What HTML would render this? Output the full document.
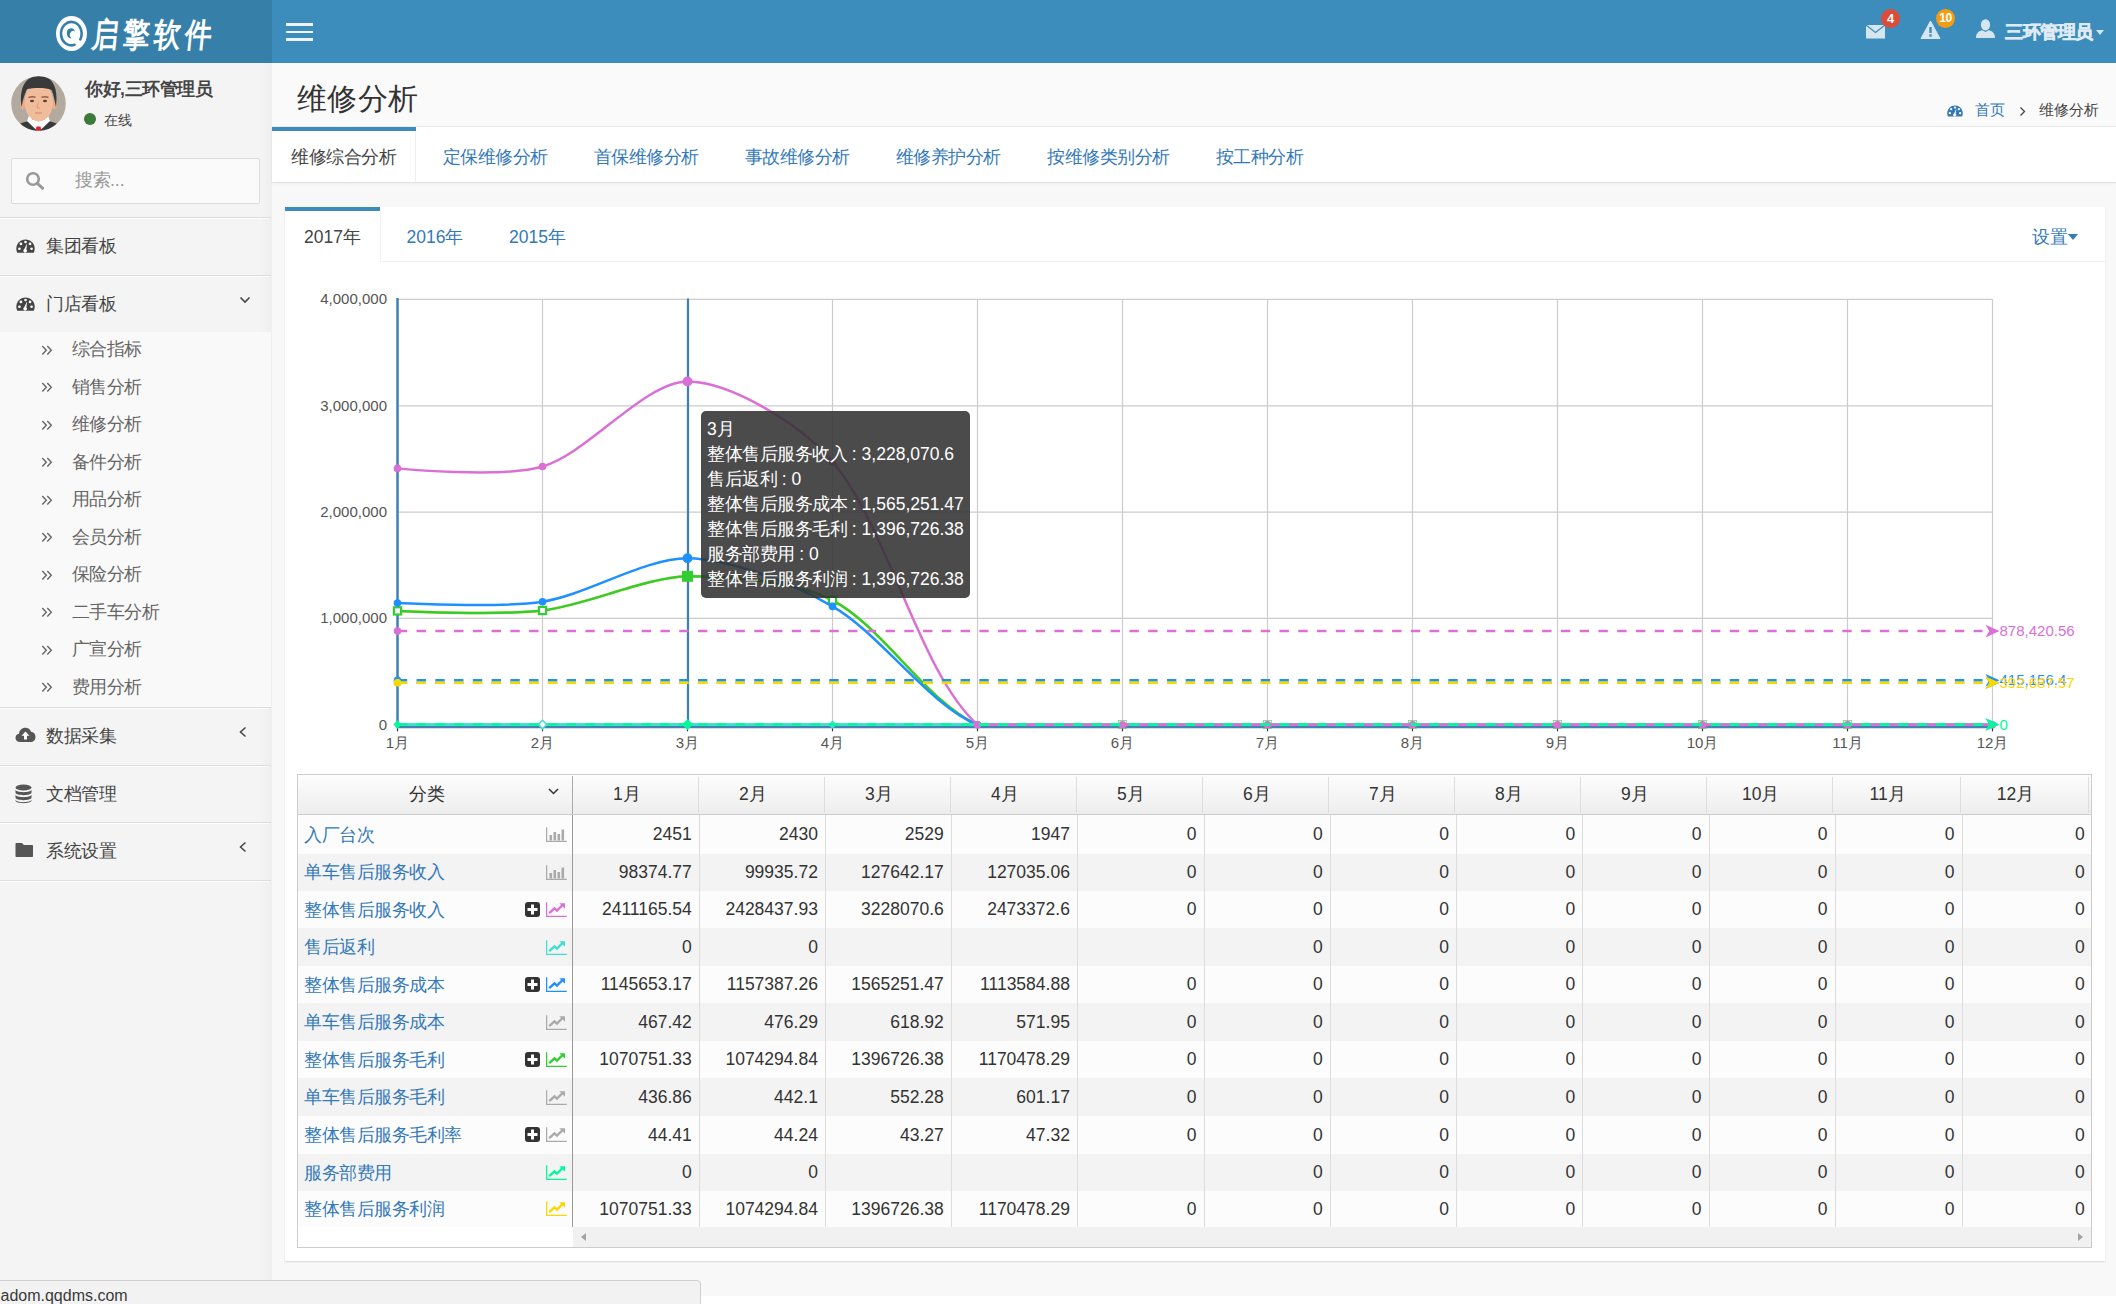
<!DOCTYPE html>
<html><head><meta charset="utf-8"><title>维修分析</title>
<style>
html,body{margin:0;padding:0;}
body{width:2116px;height:1304px;overflow:hidden;position:relative;background:#fff;font-family:'Liberation Sans', sans-serif;}
.t{position:absolute;white-space:nowrap;}
</style></head><body>
<div style="position:absolute;left:0;top:0;width:272px;height:63px;background:#367fa9"></div>
<div style="position:absolute;left:272px;top:0;width:1844px;height:63px;background:#3c8dbc"></div>
<svg style="position:absolute;left:50px;top:10px" width="50" height="46" viewBox="0 0 50 46">
<ellipse cx="21.5" cy="23.5" rx="15.5" ry="17.5" fill="#fff"/>
<path d="M30.3 29.4 A10.3 11.7 0 1 0 24.5 34.8" fill="none" stroke="#367fa9" stroke-width="2.6" stroke-linecap="round"/>
<path d="M25 21.5 A4.2 5 0 1 0 21.5 28.2 A3 3.6 0 0 1 25 21.5 Z" fill="#367fa9"/>
</svg>
<div class="t" style="left:94px;top:17px;font-size:31px;line-height:34px;color:#fff;font-weight:bold;letter-spacing:5px;transform:scale(0.86,1.06) skewX(-7deg);transform-origin:0 0;">启擎软件</div>
<div style="position:absolute;left:286px;top:23px;width:27px;height:2.5px;background:#fff;opacity:.9"></div>
<div style="position:absolute;left:286px;top:30.5px;width:27px;height:2.5px;background:#fff;opacity:.9"></div>
<div style="position:absolute;left:286px;top:38px;width:27px;height:2.5px;background:#fff;opacity:.9"></div>
<svg style="position:absolute;left:1865px;top:23px" width="21" height="17" viewBox="0 0 21 17">
<path d="M1 2 h19 v13.5 h-19 z" fill="#d6e6f1"/>
<path d="M1 2 L10.5 9.5 L20 2" fill="none" stroke="#3c8dbc" stroke-width="1.3"/>
</svg>
<div style="position:absolute;left:1881px;top:9px;width:19px;height:19px;border-radius:50%;background:#dd4b39;color:#fff;font:bold 13px/19px 'Liberation Sans', sans-serif;text-align:center">4</div>
<svg style="position:absolute;left:1920px;top:20px" width="21" height="20" viewBox="0 0 21 20">
<path d="M10.5 1 L20 18.5 L1 18.5 Z" fill="#d6e6f1" stroke="#d6e6f1" stroke-width="1" stroke-linejoin="round"/>
<rect x="9.3" y="7" width="2.4" height="6" fill="#3c8dbc"/><rect x="9.3" y="14.3" width="2.4" height="2.4" fill="#3c8dbc"/>
</svg>
<div style="position:absolute;left:1936px;top:9px;width:19px;height:19px;border-radius:50%;background:#f39c12;color:#fff;font:bold 12px/19px 'Liberation Sans', sans-serif;text-align:center;letter-spacing:-0.5px">10</div>
<svg style="position:absolute;left:1975px;top:19px" width="21" height="20" viewBox="0 0 21 20">
<ellipse cx="10.5" cy="5.8" rx="4.6" ry="5.6" fill="#d6e6f1"/>
<path d="M1 19 C1 13.5 4 12 7.5 11.2 L10.5 13 L13.5 11.2 C17 12 20 13.5 20 19 Z" fill="#d6e6f1"/>
</svg>
<div class="t" style="left:2005px;top:24px;font-size:17.5px;line-height:17.5px;color:#dfeaf3;font-weight:bold;-webkit-text-stroke:0.6px #dfeaf3;"><span style="letter-spacing:-0.50px">三环管理员</span></div>
<div style="position:absolute;left:2096px;top:30px;width:0;height:0;border-left:4.5px solid transparent;border-right:4.5px solid transparent;border-top:5px solid #d6e6f1"></div>
<div style="position:absolute;left:0;top:63px;width:272px;height:1241px;background:#f4f4f4"></div>
<div style="position:absolute;left:260px;top:63px;width:12px;height:1241px;background:linear-gradient(to right,rgba(0,0,0,0),rgba(0,0,0,0.025))"></div>
<svg style="position:absolute;left:11px;top:76px" width="55" height="55" viewBox="0 0 55 55">
<defs><clipPath id="avc"><circle cx="27.5" cy="27.5" r="27.3"/></clipPath></defs>
<g clip-path="url(#avc)">
<rect width="55" height="55" fill="#b3aa9f"/>
<path d="M2 55 C4 49 10 46.5 19 45 L36 45 C45 46.5 51 49 53 55 Z" fill="#3a3a3a"/>
<path d="M16 45 L27.5 56 L39 45 L37 39.5 L18 39.5 Z" fill="#fff"/>
<path d="M25.5 50.5 L29.5 50.5 L30.5 55 L24.5 55 Z" fill="#e0222c"/>
<rect x="21" y="36" width="13" height="8" fill="#e3a786"/>
<ellipse cx="11.8" cy="28.5" rx="2.6" ry="4.8" fill="#e9ab8a"/><ellipse cx="43.2" cy="28.5" rx="2.6" ry="4.8" fill="#e9ab8a"/>
<ellipse cx="27.8" cy="26" rx="14.2" ry="19.5" fill="#f1bc9c"/>
<path d="M10.5 31 C8 12 14 0 28 0 C42 0 47.5 12 45 31 C43.5 24 42.5 18 40.5 14 C34 11 22 12 16 13 C14 17 12 23 10.5 31 Z" fill="#3a3a3a"/>
<path d="M17.5 21.5 Q21 20 24.5 21.3" stroke="#9a6048" stroke-width="1.5" fill="none"/><path d="M30.5 21.3 Q34 20 37.5 21.5" stroke="#9a6048" stroke-width="1.5" fill="none"/>
<ellipse cx="21" cy="25" rx="2" ry="1.2" fill="#5a4030"/><ellipse cx="34" cy="25" rx="2" ry="1.2" fill="#5a4030"/>
<path d="M27.5 26 L26 32 L29 32" stroke="#d89a7c" stroke-width="0.9" fill="none"/>
<path d="M24 37 L31 37" stroke="#c98870" stroke-width="1"/>
</g></svg>
<div class="t" style="left:85px;top:81px;font-size:17.5px;line-height:17.5px;color:#444;font-weight:bold;"><span style="letter-spacing:-0.50px">你好</span>,<span style="letter-spacing:-0.50px">三环管理员</span></div>
<div style="position:absolute;left:84px;top:113px;width:12px;height:12px;border-radius:50%;background:#3b7a3b"></div>
<div class="t" style="left:104px;top:113.5px;font-size:13.75px;line-height:13.75px;color:#444;font-weight:normal;"><span style="letter-spacing:-0.25px">在线</span></div>
<div style="position:absolute;left:10.5px;top:158px;width:247px;height:44px;border:1px solid #dcdcdc;border-radius:2px;background:#fafafa"></div>
<svg style="position:absolute;left:25px;top:171px" width="20" height="19" viewBox="0 0 20 19">
<circle cx="8" cy="8" r="5.8" fill="none" stroke="#999" stroke-width="2.6"/>
<path d="M12.3 12.3 L17.5 17.2" stroke="#999" stroke-width="3" stroke-linecap="round"/>
</svg>
<div class="t" style="left:75px;top:172px;font-size:17.5px;line-height:17.5px;color:#999;font-weight:normal;"><span style="letter-spacing:-0.50px">搜索</span>...</div>
<div style="position:absolute;left:0;top:217px;width:271px;height:1px;background:#dddddd"></div>
<div style="position:absolute;left:0;top:218px;width:269px;height:1px;background:rgba(255,255,255,0.8)"></div>
<div style="position:absolute;left:0;top:275px;width:271px;height:1px;background:#dddddd"></div>
<div style="position:absolute;left:0;top:276px;width:269px;height:1px;background:rgba(255,255,255,0.8)"></div>
<div style="position:absolute;left:0;top:707px;width:271px;height:1px;background:#dddddd"></div>
<div style="position:absolute;left:0;top:708px;width:269px;height:1px;background:rgba(255,255,255,0.8)"></div>
<div style="position:absolute;left:0;top:765px;width:271px;height:1px;background:#dddddd"></div>
<div style="position:absolute;left:0;top:766px;width:269px;height:1px;background:rgba(255,255,255,0.8)"></div>
<div style="position:absolute;left:0;top:822px;width:271px;height:1px;background:#dddddd"></div>
<div style="position:absolute;left:0;top:823px;width:269px;height:1px;background:rgba(255,255,255,0.8)"></div>
<div style="position:absolute;left:0;top:880px;width:271px;height:1px;background:#dddddd"></div>
<div style="position:absolute;left:0;top:881px;width:269px;height:1px;background:rgba(255,255,255,0.8)"></div>
<div style="position:absolute;left:0;top:331.5px;width:271px;height:375.5px;background:#f9f9f9"></div>
<svg style="position:absolute;left:16px;top:239px" width="19" height="14.2" viewBox="0 0 20 15">
<path d="M10 0.5 C4.5 0.5 0.3 4.8 0.3 10.3 C0.3 11.8 0.6 13.2 1.2 14.5 L18.8 14.5 C19.4 13.2 19.7 11.8 19.7 10.3 C19.7 4.8 15.5 0.5 10 0.5 Z" fill="#444"/>
<circle cx="3.6" cy="10.3" r="1.4" fill="#fff"/><circle cx="5.2" cy="5.2" r="1.4" fill="#fff"/><circle cx="10" cy="3.2" r="1.4" fill="#fff"/>
<circle cx="14.8" cy="5.2" r="1.4" fill="#fff"/><circle cx="16.4" cy="10.3" r="1.4" fill="#fff"/>
<path d="M11.8 4.5 L10.9 11 A1.9 1.9 0 1 1 8.6 10.8 Z" fill="#fff"/>
</svg>
<div class="t" style="left:46px;top:238px;font-size:17.5px;line-height:17.5px;color:#444;font-weight:normal;"><span style="letter-spacing:-0.50px">集团看板</span></div>
<svg style="position:absolute;left:16px;top:297px" width="19" height="14.2" viewBox="0 0 20 15">
<path d="M10 0.5 C4.5 0.5 0.3 4.8 0.3 10.3 C0.3 11.8 0.6 13.2 1.2 14.5 L18.8 14.5 C19.4 13.2 19.7 11.8 19.7 10.3 C19.7 4.8 15.5 0.5 10 0.5 Z" fill="#444"/>
<circle cx="3.6" cy="10.3" r="1.4" fill="#fff"/><circle cx="5.2" cy="5.2" r="1.4" fill="#fff"/><circle cx="10" cy="3.2" r="1.4" fill="#fff"/>
<circle cx="14.8" cy="5.2" r="1.4" fill="#fff"/><circle cx="16.4" cy="10.3" r="1.4" fill="#fff"/>
<path d="M11.8 4.5 L10.9 11 A1.9 1.9 0 1 1 8.6 10.8 Z" fill="#fff"/>
</svg>
<div class="t" style="left:46px;top:296px;font-size:17.5px;line-height:17.5px;color:#444;font-weight:normal;"><span style="letter-spacing:-0.50px">门店看板</span></div>
<svg style="position:absolute;left:239px;top:296px" width="12" height="8" viewBox="0 0 12 8"><path d="M1.5 1.5 L6 6 L10.5 1.5" fill="none" stroke="#444" stroke-width="1.6"/></svg>
<svg style="position:absolute;left:41px;top:344.5px" width="12" height="11" viewBox="0 0 12 11"><path d="M1.3 1 L5.3 5.2 L1.3 9.4 M6.3 1 L10.3 5.2 L6.3 9.4" fill="none" stroke="#666" stroke-width="1.4"/></svg>
<div class="t" style="left:71.5px;top:341.0px;font-size:17.5px;line-height:17.5px;color:#666;font-weight:normal;"><span style="letter-spacing:-0.50px">综合指标</span></div>
<svg style="position:absolute;left:41px;top:382.0px" width="12" height="11" viewBox="0 0 12 11"><path d="M1.3 1 L5.3 5.2 L1.3 9.4 M6.3 1 L10.3 5.2 L6.3 9.4" fill="none" stroke="#666" stroke-width="1.4"/></svg>
<div class="t" style="left:71.5px;top:378.5px;font-size:17.5px;line-height:17.5px;color:#666;font-weight:normal;"><span style="letter-spacing:-0.50px">销售分析</span></div>
<svg style="position:absolute;left:41px;top:419.5px" width="12" height="11" viewBox="0 0 12 11"><path d="M1.3 1 L5.3 5.2 L1.3 9.4 M6.3 1 L10.3 5.2 L6.3 9.4" fill="none" stroke="#666" stroke-width="1.4"/></svg>
<div class="t" style="left:71.5px;top:416.0px;font-size:17.5px;line-height:17.5px;color:#666;font-weight:normal;"><span style="letter-spacing:-0.50px">维修分析</span></div>
<svg style="position:absolute;left:41px;top:457.0px" width="12" height="11" viewBox="0 0 12 11"><path d="M1.3 1 L5.3 5.2 L1.3 9.4 M6.3 1 L10.3 5.2 L6.3 9.4" fill="none" stroke="#666" stroke-width="1.4"/></svg>
<div class="t" style="left:71.5px;top:453.5px;font-size:17.5px;line-height:17.5px;color:#666;font-weight:normal;"><span style="letter-spacing:-0.50px">备件分析</span></div>
<svg style="position:absolute;left:41px;top:494.5px" width="12" height="11" viewBox="0 0 12 11"><path d="M1.3 1 L5.3 5.2 L1.3 9.4 M6.3 1 L10.3 5.2 L6.3 9.4" fill="none" stroke="#666" stroke-width="1.4"/></svg>
<div class="t" style="left:71.5px;top:491.0px;font-size:17.5px;line-height:17.5px;color:#666;font-weight:normal;"><span style="letter-spacing:-0.50px">用品分析</span></div>
<svg style="position:absolute;left:41px;top:532.0px" width="12" height="11" viewBox="0 0 12 11"><path d="M1.3 1 L5.3 5.2 L1.3 9.4 M6.3 1 L10.3 5.2 L6.3 9.4" fill="none" stroke="#666" stroke-width="1.4"/></svg>
<div class="t" style="left:71.5px;top:528.5px;font-size:17.5px;line-height:17.5px;color:#666;font-weight:normal;"><span style="letter-spacing:-0.50px">会员分析</span></div>
<svg style="position:absolute;left:41px;top:569.5px" width="12" height="11" viewBox="0 0 12 11"><path d="M1.3 1 L5.3 5.2 L1.3 9.4 M6.3 1 L10.3 5.2 L6.3 9.4" fill="none" stroke="#666" stroke-width="1.4"/></svg>
<div class="t" style="left:71.5px;top:566.0px;font-size:17.5px;line-height:17.5px;color:#666;font-weight:normal;"><span style="letter-spacing:-0.50px">保险分析</span></div>
<svg style="position:absolute;left:41px;top:607.0px" width="12" height="11" viewBox="0 0 12 11"><path d="M1.3 1 L5.3 5.2 L1.3 9.4 M6.3 1 L10.3 5.2 L6.3 9.4" fill="none" stroke="#666" stroke-width="1.4"/></svg>
<div class="t" style="left:71.5px;top:603.5px;font-size:17.5px;line-height:17.5px;color:#666;font-weight:normal;"><span style="letter-spacing:-0.50px">二手车分析</span></div>
<svg style="position:absolute;left:41px;top:644.5px" width="12" height="11" viewBox="0 0 12 11"><path d="M1.3 1 L5.3 5.2 L1.3 9.4 M6.3 1 L10.3 5.2 L6.3 9.4" fill="none" stroke="#666" stroke-width="1.4"/></svg>
<div class="t" style="left:71.5px;top:641.0px;font-size:17.5px;line-height:17.5px;color:#666;font-weight:normal;"><span style="letter-spacing:-0.50px">广宣分析</span></div>
<svg style="position:absolute;left:41px;top:682.0px" width="12" height="11" viewBox="0 0 12 11"><path d="M1.3 1 L5.3 5.2 L1.3 9.4 M6.3 1 L10.3 5.2 L6.3 9.4" fill="none" stroke="#666" stroke-width="1.4"/></svg>
<div class="t" style="left:71.5px;top:678.5px;font-size:17.5px;line-height:17.5px;color:#666;font-weight:normal;"><span style="letter-spacing:-0.50px">费用分析</span></div>
<svg style="position:absolute;left:15px;top:727px" width="21" height="16" viewBox="0 0 21 16">
<path d="M5 15 C2.2 15 0.5 13 0.5 10.7 C0.5 8.6 2 7 4 6.7 C4.3 3.3 7 0.8 10.3 0.8 C13 0.8 15.2 2.4 16 4.8 C18.6 5 20.5 7.2 20.5 9.9 C20.5 12.8 18.3 15 15.5 15 Z" fill="#555"/>
<path d="M10.5 4.5 L14.5 8.8 L12 8.8 L12 12.5 L9 12.5 L9 8.8 L6.5 8.8 Z" fill="#fff"/>
</svg>
<div class="t" style="left:46px;top:728px;font-size:17.5px;line-height:17.5px;color:#444;font-weight:normal;"><span style="letter-spacing:-0.50px">数据采集</span></div>
<svg style="position:absolute;left:238px;top:726px" width="10" height="12" viewBox="0 0 10 12"><path d="M7.5 1.5 L2.5 6 L7.5 10.5" fill="none" stroke="#444" stroke-width="1.5"/></svg>
<svg style="position:absolute;left:15px;top:784px" width="18" height="20" viewBox="0 0 18 20">
<ellipse cx="8.5" cy="3.5" rx="8" ry="3" fill="#555"/>
<path d="M0.5 5.5 C0.5 9 16.5 9 16.5 5.5 L16.5 8.5 C16.5 12 0.5 12 0.5 8.5 Z" fill="#555"/>
<path d="M0.5 10.5 C0.5 14 16.5 14 16.5 10.5 L16.5 13.5 C16.5 17 0.5 17 0.5 13.5 Z" fill="#555"/>
<path d="M0.5 15.5 C0.5 19 16.5 19 16.5 15.5 L16.5 16.5 C16.5 20 0.5 20 0.5 16.5 Z" fill="#555"/>
</svg>
<div class="t" style="left:46px;top:786px;font-size:17.5px;line-height:17.5px;color:#444;font-weight:normal;"><span style="letter-spacing:-0.50px">文档管理</span></div>
<svg style="position:absolute;left:15px;top:842px" width="19" height="16" viewBox="0 0 19 16">
<path d="M1.5 1 L7 1 L8.8 3 L17 3 C17.6 3 18 3.4 18 4 L18 14 C18 14.6 17.6 15 17 15 L1.5 15 C0.9 15 0.5 14.6 0.5 14 L0.5 2 C0.5 1.4 0.9 1 1.5 1 Z" fill="#555"/>
</svg>
<div class="t" style="left:46px;top:843px;font-size:17.5px;line-height:17.5px;color:#444;font-weight:normal;"><span style="letter-spacing:-0.50px">系统设置</span></div>
<svg style="position:absolute;left:238px;top:841px" width="10" height="12" viewBox="0 0 10 12"><path d="M7.5 1.5 L2.5 6 L7.5 10.5" fill="none" stroke="#444" stroke-width="1.5"/></svg>
<div style="position:absolute;left:272px;top:63px;width:1844px;height:64px;background:#fafafa"></div>
<div class="t" style="left:297px;top:83.5px;font-size:30px;line-height:30px;color:#333;font-weight:normal;letter-spacing:0.4px;">维修分析</div>
<svg style="position:absolute;left:1947px;top:104.5px" width="16" height="12.0" viewBox="0 0 20 15">
<path d="M10 0.5 C4.5 0.5 0.3 4.8 0.3 10.3 C0.3 11.8 0.6 13.2 1.2 14.5 L18.8 14.5 C19.4 13.2 19.7 11.8 19.7 10.3 C19.7 4.8 15.5 0.5 10 0.5 Z" fill="#3479b8"/>
<circle cx="3.6" cy="10.3" r="1.4" fill="#fff"/><circle cx="5.2" cy="5.2" r="1.4" fill="#fff"/><circle cx="10" cy="3.2" r="1.4" fill="#fff"/>
<circle cx="14.8" cy="5.2" r="1.4" fill="#fff"/><circle cx="16.4" cy="10.3" r="1.4" fill="#fff"/>
<path d="M11.8 4.5 L10.9 11 A1.9 1.9 0 1 1 8.6 10.8 Z" fill="#fff"/>
</svg>
<div class="t" style="left:1974.5px;top:102px;font-size:15px;line-height:15px;color:#3479b8;font-weight:normal;">首页</div>
<svg style="position:absolute;left:2018px;top:106px" width="9" height="11" viewBox="0 0 9 11"><path d="M2.5 1.5 L6.5 5.5 L2.5 9.5" fill="none" stroke="#444" stroke-width="1.3"/></svg>
<div class="t" style="left:2038.5px;top:102px;font-size:15px;line-height:15px;color:#444;font-weight:normal;">维修分析</div>
<div style="position:absolute;left:272px;top:182px;width:1844px;height:1114px;background:#f8f8f8"></div>
<div style="position:absolute;left:272px;top:127px;width:1844px;height:55px;background:#fff;box-shadow:0 1px 1px rgba(0,0,0,0.05),0 1px 3px rgba(0,0,0,0.06)"></div>
<div style="position:absolute;left:272px;top:126px;width:1844px;height:1px;background:#ebebeb"></div>
<div style="position:absolute;left:272px;top:127px;width:144px;height:4px;background:#3c8dbc"></div>
<div style="position:absolute;left:415px;top:131px;width:1px;height:51px;background:#f0f0f0"></div>
<div class="t" style="left:291px;top:148.5px;font-size:17.5px;line-height:17.5px;color:#444;font-weight:normal;"><span style="letter-spacing:-0.50px">维修综合分析</span></div>
<div class="t" style="left:442.5px;top:148.5px;font-size:17.5px;line-height:17.5px;color:#3479b8;font-weight:normal;"><span style="letter-spacing:-0.50px">定保维修分析</span></div>
<div class="t" style="left:593.8px;top:148.5px;font-size:17.5px;line-height:17.5px;color:#3479b8;font-weight:normal;"><span style="letter-spacing:-0.50px">首保维修分析</span></div>
<div class="t" style="left:744.8px;top:148.5px;font-size:17.5px;line-height:17.5px;color:#3479b8;font-weight:normal;"><span style="letter-spacing:-0.50px">事故维修分析</span></div>
<div class="t" style="left:895.8px;top:148.5px;font-size:17.5px;line-height:17.5px;color:#3479b8;font-weight:normal;"><span style="letter-spacing:-0.50px">维修养护分析</span></div>
<div class="t" style="left:1047px;top:148.5px;font-size:17.5px;line-height:17.5px;color:#3479b8;font-weight:normal;"><span style="letter-spacing:-0.50px">按维修类别分析</span></div>
<div class="t" style="left:1215.5px;top:148.5px;font-size:17.5px;line-height:17.5px;color:#3479b8;font-weight:normal;"><span style="letter-spacing:-0.50px">按工种分析</span></div>
<div style="position:absolute;left:285px;top:207px;width:1820px;height:1054px;background:#fff;box-shadow:0 1px 1.5px rgba(0,0,0,0.12)"></div>
<div style="position:absolute;left:285px;top:207px;width:95px;height:4px;background:#3c8dbc"></div>
<div style="position:absolute;left:379.5px;top:211px;width:1px;height:50px;background:#f0f0f0"></div>
<div style="position:absolute;left:380px;top:261px;width:1725px;height:1px;background:#f0f0f0"></div>
<div class="t" style="left:304px;top:228.5px;font-size:17.5px;line-height:17.5px;color:#444;font-weight:normal;">2017<span style="letter-spacing:-0.50px">年</span></div>
<div class="t" style="left:406.5px;top:228.5px;font-size:17.5px;line-height:17.5px;color:#3479b8;font-weight:normal;">2016<span style="letter-spacing:-0.50px">年</span></div>
<div class="t" style="left:509px;top:228.5px;font-size:17.5px;line-height:17.5px;color:#3479b8;font-weight:normal;">2015<span style="letter-spacing:-0.50px">年</span></div>
<div class="t" style="left:2032px;top:229px;font-size:17.5px;line-height:17.5px;color:#3479b8;font-weight:normal;"><span style="letter-spacing:-0.50px">设置</span></div>
<div style="position:absolute;left:2068px;top:234px;width:0;height:0;border-left:5px solid transparent;border-right:5px solid transparent;border-top:6px solid #3479b8"></div>
<svg style="position:absolute;left:0;top:0" width="2116" height="1304" viewBox="0 0 2116 1304">
<line x1="397.5" y1="724.8" x2="1992.5" y2="724.8" stroke="#cccccc" stroke-width="1.2"/>
<line x1="397.5" y1="618.4" x2="1992.5" y2="618.4" stroke="#cccccc" stroke-width="1.2"/>
<line x1="397.5" y1="512.1" x2="1992.5" y2="512.1" stroke="#cccccc" stroke-width="1.2"/>
<line x1="397.5" y1="405.8" x2="1992.5" y2="405.8" stroke="#cccccc" stroke-width="1.2"/>
<line x1="397.5" y1="299.4" x2="1992.5" y2="299.4" stroke="#cccccc" stroke-width="1.2"/>
<line x1="542.5" y1="299.4" x2="542.5" y2="724.8" stroke="#cccccc" stroke-width="1.2"/>
<line x1="687.5" y1="299.4" x2="687.5" y2="724.8" stroke="#cccccc" stroke-width="1.2"/>
<line x1="832.5" y1="299.4" x2="832.5" y2="724.8" stroke="#cccccc" stroke-width="1.2"/>
<line x1="977.5" y1="299.4" x2="977.5" y2="724.8" stroke="#cccccc" stroke-width="1.2"/>
<line x1="1122.5" y1="299.4" x2="1122.5" y2="724.8" stroke="#cccccc" stroke-width="1.2"/>
<line x1="1267.5" y1="299.4" x2="1267.5" y2="724.8" stroke="#cccccc" stroke-width="1.2"/>
<line x1="1412.5" y1="299.4" x2="1412.5" y2="724.8" stroke="#cccccc" stroke-width="1.2"/>
<line x1="1557.5" y1="299.4" x2="1557.5" y2="724.8" stroke="#cccccc" stroke-width="1.2"/>
<line x1="1702.5" y1="299.4" x2="1702.5" y2="724.8" stroke="#cccccc" stroke-width="1.2"/>
<line x1="1847.5" y1="299.4" x2="1847.5" y2="724.8" stroke="#cccccc" stroke-width="1.2"/>
<line x1="1992.5" y1="299.4" x2="1992.5" y2="724.8" stroke="#cccccc" stroke-width="1.2"/>
<line x1="397.5" y1="725.8" x2="397.5" y2="731.3" stroke="#333" stroke-width="1.2"/>
<line x1="542.5" y1="725.8" x2="542.5" y2="731.3" stroke="#333" stroke-width="1.2"/>
<line x1="687.5" y1="725.8" x2="687.5" y2="731.3" stroke="#333" stroke-width="1.2"/>
<line x1="832.5" y1="725.8" x2="832.5" y2="731.3" stroke="#333" stroke-width="1.2"/>
<line x1="977.5" y1="725.8" x2="977.5" y2="731.3" stroke="#333" stroke-width="1.2"/>
<line x1="1122.5" y1="725.8" x2="1122.5" y2="731.3" stroke="#333" stroke-width="1.2"/>
<line x1="1267.5" y1="725.8" x2="1267.5" y2="731.3" stroke="#333" stroke-width="1.2"/>
<line x1="1412.5" y1="725.8" x2="1412.5" y2="731.3" stroke="#333" stroke-width="1.2"/>
<line x1="1557.5" y1="725.8" x2="1557.5" y2="731.3" stroke="#333" stroke-width="1.2"/>
<line x1="1702.5" y1="725.8" x2="1702.5" y2="731.3" stroke="#333" stroke-width="1.2"/>
<line x1="1847.5" y1="725.8" x2="1847.5" y2="731.3" stroke="#333" stroke-width="1.2"/>
<line x1="1992.5" y1="725.8" x2="1992.5" y2="731.3" stroke="#333" stroke-width="1.2"/>
<line x1="397.5" y1="297.9" x2="397.5" y2="727.3" stroke="#3e80b6" stroke-width="2.5"/>
<line x1="396.5" y1="726.9" x2="1993.5" y2="726.9" stroke="#4682b4" stroke-width="2.6"/>
<line x1="688.0" y1="298.4" x2="688.0" y2="724.8" stroke="#3e80b6" stroke-width="2.2"/>
<path d="M397.50,610.93 C397.50,610.93 499.59,615.68 542.50,610.55 C586.59,605.28 643.70,577.80 687.50,576.26 C730.70,576.26 794.68,580.95 832.50,600.32 C881.68,625.51 928.03,703.57 977.50,724.80 C1015.03,724.80 1079.00,724.80 1122.50,724.80 C1166.00,724.80 1224.00,724.80 1267.50,724.80 C1311.00,724.80 1369.00,724.80 1412.50,724.80 C1456.00,724.80 1514.00,724.80 1557.50,724.80 C1601.00,724.80 1659.00,724.80 1702.50,724.80 C1746.00,724.80 1804.00,724.80 1847.50,724.80 C1891.00,724.80 1992.50,724.80 1992.50,724.80" fill="none" stroke="#ffd700" stroke-width="2.5" stroke-linejoin="round"/>
<line x1="397.5" y1="724.5" x2="1992.5" y2="724.5" stroke="#00fa9a" stroke-width="2.5"/>
<path d="M397.50,610.93 C397.50,610.93 499.59,615.68 542.50,610.55 C586.59,605.28 643.70,577.80 687.50,576.26 C730.70,576.26 794.68,580.95 832.50,600.32 C881.68,625.51 928.03,703.57 977.50,724.80 C1015.03,724.80 1079.00,724.80 1122.50,724.80 C1166.00,724.80 1224.00,724.80 1267.50,724.80 C1311.00,724.80 1369.00,724.80 1412.50,724.80 C1456.00,724.80 1514.00,724.80 1557.50,724.80 C1601.00,724.80 1659.00,724.80 1702.50,724.80 C1746.00,724.80 1804.00,724.80 1847.50,724.80 C1891.00,724.80 1992.50,724.80 1992.50,724.80" fill="none" stroke="#32cd32" stroke-width="2.5" stroke-linejoin="round"/>
<rect x="393.9" y="607.3" width="7.2" height="7.2" fill="#fff" stroke="#32cd32" stroke-width="2.2"/>
<rect x="538.9" y="606.9" width="7.2" height="7.2" fill="#fff" stroke="#32cd32" stroke-width="2.2"/>
<rect x="682.0" y="570.8" width="11" height="11" fill="#32cd32"/>
<rect x="828.9" y="596.7" width="7.2" height="7.2" fill="#fff" stroke="#32cd32" stroke-width="2.2"/>
<rect x="1118.5" y="720.5" width="8" height="8" fill="none" stroke="#32cd32" stroke-width="0.8" opacity="0.7"/>
<rect x="1263.5" y="720.5" width="8" height="8" fill="none" stroke="#32cd32" stroke-width="0.8" opacity="0.7"/>
<rect x="1408.5" y="720.5" width="8" height="8" fill="none" stroke="#32cd32" stroke-width="0.8" opacity="0.7"/>
<rect x="1553.5" y="720.5" width="8" height="8" fill="none" stroke="#32cd32" stroke-width="0.8" opacity="0.7"/>
<rect x="1698.5" y="720.5" width="8" height="8" fill="none" stroke="#32cd32" stroke-width="0.8" opacity="0.7"/>
<rect x="1843.5" y="720.5" width="8" height="8" fill="none" stroke="#32cd32" stroke-width="0.8" opacity="0.7"/>
<path d="M397.50,602.96 C397.50,602.96 499.93,608.26 542.50,601.71 C586.93,594.87 644.20,558.34 687.50,558.34 C731.20,559.04 793.41,583.93 832.50,606.37 C880.41,633.87 928.47,704.78 977.50,724.80 C1015.47,724.80 1079.00,724.80 1122.50,724.80 C1166.00,724.80 1224.00,724.80 1267.50,724.80 C1311.00,724.80 1369.00,724.80 1412.50,724.80 C1456.00,724.80 1514.00,724.80 1557.50,724.80 C1601.00,724.80 1659.00,724.80 1702.50,724.80 C1746.00,724.80 1804.00,724.80 1847.50,724.80 C1891.00,724.80 1992.50,724.80 1992.50,724.80" fill="none" stroke="#1e90ff" stroke-width="2.5" stroke-linejoin="round"/>
<circle cx="397.5" cy="603.0" r="3.8" fill="#1e90ff"/>
<circle cx="542.5" cy="601.7" r="3.8" fill="#1e90ff"/>
<circle cx="687.5" cy="558.3" r="5" fill="#1e90ff"/>
<circle cx="832.5" cy="606.4" r="3.8" fill="#1e90ff"/>
<circle cx="977.5" cy="724.8" r="3.8" fill="#1e90ff"/>
<line x1="397.5" y1="724.5" x2="1992.5" y2="724.5" stroke="#40e0d0" stroke-width="2.5"/>
<path d="M393.3,724.5 L397.5,720.3 L401.7,724.5 L397.5,728.7 Z" fill="#00fa9a"/>
<path d="M538.3,724.5 L542.5,720.3 L546.7,724.5 L542.5,728.7 Z" fill="#fff" stroke="#40e0d0" stroke-width="1.6"/>
<path d="M682.0,724.5 L687.5,719.0 L693.0,724.5 L687.5,730.0 Z" fill="#00fa9a"/>
<path d="M828.3,724.5 L832.5,720.3 L836.7,724.5 L832.5,728.7 Z" fill="#40e0d0"/>
<path d="M973.3,724.5 L977.5,720.3 L981.7,724.5 L977.5,728.7 Z" fill="#40e0d0"/>
<path d="M397.50,468.37 C397.50,468.37 502.21,478.61 542.50,466.54 C589.21,452.54 643.69,382.22 687.50,381.49 C730.69,381.49 801.56,425.14 832.50,461.76 C888.56,528.13 918.83,671.58 977.50,724.80 C1005.83,724.80 1079.00,724.80 1122.50,724.80 C1166.00,724.80 1224.00,724.80 1267.50,724.80 C1311.00,724.80 1369.00,724.80 1412.50,724.80 C1456.00,724.80 1514.00,724.80 1557.50,724.80 C1601.00,724.80 1659.00,724.80 1702.50,724.80 C1746.00,724.80 1804.00,724.80 1847.50,724.80 C1891.00,724.80 1992.50,724.80 1992.50,724.80" fill="none" stroke="#da70d6" stroke-width="2.5" stroke-linejoin="round"/>
<circle cx="397.5" cy="468.4" r="3.8" fill="#da70d6"/>
<circle cx="542.5" cy="466.5" r="3.8" fill="#da70d6"/>
<circle cx="687.5" cy="381.5" r="5" fill="#da70d6"/>
<circle cx="832.5" cy="461.8" r="3.8" fill="#da70d6"/>
<circle cx="977.5" cy="724.8" r="3.8" fill="#da70d6"/>
<circle cx="1122.5" cy="724.8" r="3.8" fill="#da70d6"/>
<circle cx="1267.5" cy="724.8" r="3.8" fill="#da70d6"/>
<circle cx="1412.5" cy="724.8" r="3.8" fill="#da70d6"/>
<circle cx="1557.5" cy="724.8" r="3.8" fill="#da70d6"/>
<circle cx="1702.5" cy="724.8" r="3.8" fill="#da70d6"/>
<circle cx="1847.5" cy="724.8" r="3.8" fill="#da70d6"/>
<circle cx="1992.5" cy="724.8" r="3.8" fill="#da70d6"/>
<line x1="397.8" y1="631.1" x2="1982.5" y2="631.1" stroke="#da70d6" stroke-width="2.5" stroke-dasharray="9.38 9.38"/>
<circle cx="397.5" cy="631.1" r="3.8" fill="#da70d6"/>
<path d="M1985.5,624.8 L1999.5,631.1 L1985.5,637.4 L1989.2,631.1 Z" fill="#da70d6"/>
<text x="1999.5" y="636.2" font-family="Liberation Sans, sans-serif" font-size="15" fill="#da70d6">878,420.56</text>
<line x1="397.8" y1="724.5" x2="1982.5" y2="724.5" stroke="#40e0d0" stroke-width="2.5" stroke-dasharray="9.38 9.38"/>
<path d="M1985.5,718.2 L1999.5,724.5 L1985.5,730.8 L1989.2,724.5 Z" fill="#40e0d0"/>
<line x1="397.8" y1="680.3" x2="1982.5" y2="680.3" stroke="#1e90ff" stroke-width="2.5" stroke-dasharray="9.38 9.38"/>
<circle cx="397.5" cy="680.3" r="3.8" fill="#1e90ff"/>
<path d="M1985.5,674.0 L1999.5,680.3 L1985.5,686.6 L1989.2,680.3 Z" fill="#1e90ff"/>
<text x="1999.5" y="685.4" font-family="Liberation Sans, sans-serif" font-size="15" fill="#1e90ff">415,156.4</text>
<line x1="397.8" y1="682.7" x2="1982.5" y2="682.7" stroke="#32cd32" stroke-width="2.5" stroke-dasharray="9.38 9.38"/>
<circle cx="397.5" cy="682.7" r="3.8" fill="#32cd32"/>
<path d="M1985.5,676.4 L1999.5,682.7 L1985.5,689.0 L1989.2,682.7 Z" fill="#32cd32"/>
<line x1="397.8" y1="724.5" x2="1982.5" y2="724.5" stroke="#00fa9a" stroke-width="2.5" stroke-dasharray="9.38 9.38"/>
<path d="M1985.5,718.2 L1999.5,724.5 L1985.5,730.8 L1989.2,724.5 Z" fill="#00fa9a"/>
<text x="1999.5" y="729.6" font-family="Liberation Sans, sans-serif" font-size="15" fill="#00fa9a">0</text>
<line x1="397.8" y1="682.7" x2="1982.5" y2="682.7" stroke="#ffd700" stroke-width="2.5" stroke-dasharray="9.38 9.38"/>
<circle cx="397.5" cy="682.7" r="3.8" fill="#ffd700"/>
<path d="M1985.5,676.4 L1999.5,682.7 L1985.5,689.0 L1989.2,682.7 Z" fill="#ffd700"/>
<text x="1999.5" y="687.8" font-family="Liberation Sans, sans-serif" font-size="15" fill="#ffd700">392,687.57</text>
</svg>
<div class="t" style="left:200px;width:187px;text-align:right;top:716.8px;font-size:15px;line-height:15px;color:#555">0</div>
<div class="t" style="left:200px;width:187px;text-align:right;top:610.4px;font-size:15px;line-height:15px;color:#555">1,000,000</div>
<div class="t" style="left:200px;width:187px;text-align:right;top:504.1px;font-size:15px;line-height:15px;color:#555">2,000,000</div>
<div class="t" style="left:200px;width:187px;text-align:right;top:397.8px;font-size:15px;line-height:15px;color:#555">3,000,000</div>
<div class="t" style="left:200px;width:187px;text-align:right;top:291.4px;font-size:15px;line-height:15px;color:#555">4,000,000</div>
<div class="t" style="left:357.5px;width:80px;text-align:center;top:735px;font-size:15px;line-height:15px;color:#555">1月</div>
<div class="t" style="left:502.5px;width:80px;text-align:center;top:735px;font-size:15px;line-height:15px;color:#555">2月</div>
<div class="t" style="left:647.5px;width:80px;text-align:center;top:735px;font-size:15px;line-height:15px;color:#555">3月</div>
<div class="t" style="left:792.5px;width:80px;text-align:center;top:735px;font-size:15px;line-height:15px;color:#555">4月</div>
<div class="t" style="left:937.5px;width:80px;text-align:center;top:735px;font-size:15px;line-height:15px;color:#555">5月</div>
<div class="t" style="left:1082.5px;width:80px;text-align:center;top:735px;font-size:15px;line-height:15px;color:#555">6月</div>
<div class="t" style="left:1227.5px;width:80px;text-align:center;top:735px;font-size:15px;line-height:15px;color:#555">7月</div>
<div class="t" style="left:1372.5px;width:80px;text-align:center;top:735px;font-size:15px;line-height:15px;color:#555">8月</div>
<div class="t" style="left:1517.5px;width:80px;text-align:center;top:735px;font-size:15px;line-height:15px;color:#555">9月</div>
<div class="t" style="left:1662.5px;width:80px;text-align:center;top:735px;font-size:15px;line-height:15px;color:#555">10月</div>
<div class="t" style="left:1807.5px;width:80px;text-align:center;top:735px;font-size:15px;line-height:15px;color:#555">11月</div>
<div class="t" style="left:1952.5px;width:80px;text-align:center;top:735px;font-size:15px;line-height:15px;color:#555">12月</div>
<div style="position:absolute;left:701px;top:411px;width:269px;height:187px;border-radius:5px;background:rgba(50,50,50,0.88)"></div>
<div class="t" style="left:707px;top:421px;font-size:17.5px;line-height:17.5px;color:#fff;font-weight:normal;">3<span style="letter-spacing:-0.50px">月</span></div>
<div class="t" style="left:707px;top:446px;font-size:17.5px;line-height:17.5px;color:#fff;font-weight:normal;"><span style="letter-spacing:-0.50px">整体售后服务收入</span> : 3,228,070.6</div>
<div class="t" style="left:707px;top:471px;font-size:17.5px;line-height:17.5px;color:#fff;font-weight:normal;"><span style="letter-spacing:-0.50px">售后返利</span> : 0</div>
<div class="t" style="left:707px;top:496px;font-size:17.5px;line-height:17.5px;color:#fff;font-weight:normal;"><span style="letter-spacing:-0.50px">整体售后服务成本</span> : 1,565,251.47</div>
<div class="t" style="left:707px;top:521px;font-size:17.5px;line-height:17.5px;color:#fff;font-weight:normal;"><span style="letter-spacing:-0.50px">整体售后服务毛利</span> : 1,396,726.38</div>
<div class="t" style="left:707px;top:546px;font-size:17.5px;line-height:17.5px;color:#fff;font-weight:normal;"><span style="letter-spacing:-0.50px">服务部费用</span> : 0</div>
<div class="t" style="left:707px;top:571px;font-size:17.5px;line-height:17.5px;color:#fff;font-weight:normal;"><span style="letter-spacing:-0.50px">整体售后服务利润</span> : 1,396,726.38</div>
<div style="position:absolute;left:297px;top:774px;width:1795px;height:473.5px;background:#fff;box-sizing:border-box;border:1px solid #cccccc"></div>
<div style="position:absolute;left:298px;top:775px;width:1793px;height:39px;background:linear-gradient(#fdfdfd,#ededed);border-bottom:1px solid #cccccc"></div>
<div style="position:absolute;left:572px;top:776px;width:1px;height:38px;background:#aaaaaa"></div>
<div style="position:absolute;left:698.0px;top:777px;width:1px;height:36px;background:#dddddd"></div>
<div style="position:absolute;left:824.0px;top:777px;width:1px;height:36px;background:#dddddd"></div>
<div style="position:absolute;left:950.0px;top:777px;width:1px;height:36px;background:#dddddd"></div>
<div style="position:absolute;left:1076.0px;top:777px;width:1px;height:36px;background:#dddddd"></div>
<div style="position:absolute;left:1202.0px;top:777px;width:1px;height:36px;background:#dddddd"></div>
<div style="position:absolute;left:1328.0px;top:777px;width:1px;height:36px;background:#dddddd"></div>
<div style="position:absolute;left:1454.0px;top:777px;width:1px;height:36px;background:#dddddd"></div>
<div style="position:absolute;left:1580.0px;top:777px;width:1px;height:36px;background:#dddddd"></div>
<div style="position:absolute;left:1706.0px;top:777px;width:1px;height:36px;background:#dddddd"></div>
<div style="position:absolute;left:1832.0px;top:777px;width:1px;height:36px;background:#dddddd"></div>
<div style="position:absolute;left:1959.8px;top:777px;width:1px;height:36px;background:#dddddd"></div>
<div style="position:absolute;left:2087.7px;top:777px;width:1px;height:36px;background:#dddddd"></div>
<div class="t" style="left:409px;top:786px;font-size:17.5px;line-height:17.5px;color:#333;font-weight:normal;"><span style="letter-spacing:-0.50px">分类</span></div>
<svg style="position:absolute;left:547px;top:787px" width="13" height="9" viewBox="0 0 13 9"><path d="M2 2 L6.5 6.5 L11 2" fill="none" stroke="#333" stroke-width="1.5"/></svg>
<div class="t" style="left:586.5px;width:80px;text-align:center;top:786px;font-size:17.5px;line-height:17.5px;color:#333">1<span style="letter-spacing:-0.50px">月</span></div>
<div class="t" style="left:712.5px;width:80px;text-align:center;top:786px;font-size:17.5px;line-height:17.5px;color:#333">2<span style="letter-spacing:-0.50px">月</span></div>
<div class="t" style="left:838.5px;width:80px;text-align:center;top:786px;font-size:17.5px;line-height:17.5px;color:#333">3<span style="letter-spacing:-0.50px">月</span></div>
<div class="t" style="left:964.5px;width:80px;text-align:center;top:786px;font-size:17.5px;line-height:17.5px;color:#333">4<span style="letter-spacing:-0.50px">月</span></div>
<div class="t" style="left:1090.5px;width:80px;text-align:center;top:786px;font-size:17.5px;line-height:17.5px;color:#333">5<span style="letter-spacing:-0.50px">月</span></div>
<div class="t" style="left:1216.5px;width:80px;text-align:center;top:786px;font-size:17.5px;line-height:17.5px;color:#333">6<span style="letter-spacing:-0.50px">月</span></div>
<div class="t" style="left:1342.5px;width:80px;text-align:center;top:786px;font-size:17.5px;line-height:17.5px;color:#333">7<span style="letter-spacing:-0.50px">月</span></div>
<div class="t" style="left:1468.5px;width:80px;text-align:center;top:786px;font-size:17.5px;line-height:17.5px;color:#333">8<span style="letter-spacing:-0.50px">月</span></div>
<div class="t" style="left:1594.5px;width:80px;text-align:center;top:786px;font-size:17.5px;line-height:17.5px;color:#333">9<span style="letter-spacing:-0.50px">月</span></div>
<div class="t" style="left:1720.5px;width:80px;text-align:center;top:786px;font-size:17.5px;line-height:17.5px;color:#333">10<span style="letter-spacing:-0.50px">月</span></div>
<div class="t" style="left:1847.4px;width:80px;text-align:center;top:786px;font-size:17.5px;line-height:17.5px;color:#333">11<span style="letter-spacing:-0.50px">月</span></div>
<div class="t" style="left:1975.2px;width:80px;text-align:center;top:786px;font-size:17.5px;line-height:17.5px;color:#333">12<span style="letter-spacing:-0.50px">月</span></div>
<div style="position:absolute;left:298px;top:815.00px;width:1793px;height:38.70px;background:#fcfcfc"></div>
<div class="t" style="left:304.3px;top:826.5px;font-size:17.5px;line-height:17.5px;color:#3479b8;font-weight:normal;"><span style="letter-spacing:-0.50px">入厂台次</span></div>
<svg style="position:absolute;left:545.5px;top:827px" width="21" height="15" viewBox="0 0 21 15">
<path d="M0.6 0.2 L0.6 14.4 L20.8 14.4" fill="none" stroke="#aaaaaa" stroke-width="1.3"/>
<rect x="3.5" y="8" width="2.6" height="5.5" fill="#aaaaaa"/><rect x="7.5" y="5" width="2.6" height="8.5" fill="#aaaaaa"/>
<rect x="11.5" y="7" width="2.6" height="6.5" fill="#aaaaaa"/><rect x="15.5" y="2.5" width="2.6" height="11" fill="#aaaaaa"/>
</svg>
<div class="t" style="left:541.8px;width:150px;text-align:right;top:826.1px;font-size:17.5px;line-height:17.5px;color:#333">2451</div>
<div class="t" style="left:667.9px;width:150px;text-align:right;top:826.1px;font-size:17.5px;line-height:17.5px;color:#333">2430</div>
<div class="t" style="left:793.8px;width:150px;text-align:right;top:826.1px;font-size:17.5px;line-height:17.5px;color:#333">2529</div>
<div class="t" style="left:919.9px;width:150px;text-align:right;top:826.1px;font-size:17.5px;line-height:17.5px;color:#333">1947</div>
<div class="t" style="left:1046.5px;width:150px;text-align:right;top:826.1px;font-size:17.5px;line-height:17.5px;color:#333">0</div>
<div class="t" style="left:1172.7px;width:150px;text-align:right;top:826.1px;font-size:17.5px;line-height:17.5px;color:#333">0</div>
<div class="t" style="left:1298.9px;width:150px;text-align:right;top:826.1px;font-size:17.5px;line-height:17.5px;color:#333">0</div>
<div class="t" style="left:1425.2px;width:150px;text-align:right;top:826.1px;font-size:17.5px;line-height:17.5px;color:#333">0</div>
<div class="t" style="left:1551.5px;width:150px;text-align:right;top:826.1px;font-size:17.5px;line-height:17.5px;color:#333">0</div>
<div class="t" style="left:1677.6px;width:150px;text-align:right;top:826.1px;font-size:17.5px;line-height:17.5px;color:#333">0</div>
<div class="t" style="left:1804.5px;width:150px;text-align:right;top:826.1px;font-size:17.5px;line-height:17.5px;color:#333">0</div>
<div class="t" style="left:1934.8px;width:150px;text-align:right;top:826.1px;font-size:17.5px;line-height:17.5px;color:#333">0</div>
<div style="position:absolute;left:298px;top:853.70px;width:1793px;height:36.90px;background:#f3f3f3"></div>
<div class="t" style="left:304.3px;top:864.3px;font-size:17.5px;line-height:17.5px;color:#3479b8;font-weight:normal;"><span style="letter-spacing:-0.50px">单车售后服务收入</span></div>
<svg style="position:absolute;left:545.5px;top:865px" width="21" height="15" viewBox="0 0 21 15">
<path d="M0.6 0.2 L0.6 14.4 L20.8 14.4" fill="none" stroke="#aaaaaa" stroke-width="1.3"/>
<rect x="3.5" y="8" width="2.6" height="5.5" fill="#aaaaaa"/><rect x="7.5" y="5" width="2.6" height="8.5" fill="#aaaaaa"/>
<rect x="11.5" y="7" width="2.6" height="6.5" fill="#aaaaaa"/><rect x="15.5" y="2.5" width="2.6" height="11" fill="#aaaaaa"/>
</svg>
<div class="t" style="left:541.8px;width:150px;text-align:right;top:863.9px;font-size:17.5px;line-height:17.5px;color:#333">98374.77</div>
<div class="t" style="left:667.9px;width:150px;text-align:right;top:863.9px;font-size:17.5px;line-height:17.5px;color:#333">99935.72</div>
<div class="t" style="left:793.8px;width:150px;text-align:right;top:863.9px;font-size:17.5px;line-height:17.5px;color:#333">127642.17</div>
<div class="t" style="left:919.9px;width:150px;text-align:right;top:863.9px;font-size:17.5px;line-height:17.5px;color:#333">127035.06</div>
<div class="t" style="left:1046.5px;width:150px;text-align:right;top:863.9px;font-size:17.5px;line-height:17.5px;color:#333">0</div>
<div class="t" style="left:1172.7px;width:150px;text-align:right;top:863.9px;font-size:17.5px;line-height:17.5px;color:#333">0</div>
<div class="t" style="left:1298.9px;width:150px;text-align:right;top:863.9px;font-size:17.5px;line-height:17.5px;color:#333">0</div>
<div class="t" style="left:1425.2px;width:150px;text-align:right;top:863.9px;font-size:17.5px;line-height:17.5px;color:#333">0</div>
<div class="t" style="left:1551.5px;width:150px;text-align:right;top:863.9px;font-size:17.5px;line-height:17.5px;color:#333">0</div>
<div class="t" style="left:1677.6px;width:150px;text-align:right;top:863.9px;font-size:17.5px;line-height:17.5px;color:#333">0</div>
<div class="t" style="left:1804.5px;width:150px;text-align:right;top:863.9px;font-size:17.5px;line-height:17.5px;color:#333">0</div>
<div class="t" style="left:1934.8px;width:150px;text-align:right;top:863.9px;font-size:17.5px;line-height:17.5px;color:#333">0</div>
<div style="position:absolute;left:298px;top:890.60px;width:1793px;height:37.80px;background:#fcfcfc"></div>
<div class="t" style="left:304.3px;top:901.6px;font-size:17.5px;line-height:17.5px;color:#3479b8;font-weight:normal;"><span style="letter-spacing:-0.50px">整体售后服务收入</span></div>
<svg style="position:absolute;left:545.5px;top:902px" width="21" height="15" viewBox="0 0 21 15">
<path d="M0.6 0.2 L0.6 14.4 L20.8 14.4" fill="none" stroke="#da70d6" stroke-width="1.3"/>
<path d="M3.2 11.2 L8.5 6.3 L11 8.6 L16.6 3" fill="none" stroke="#da70d6" stroke-width="2.4"/>
<path d="M13.3 1.2 L19 1.2 L19 6.8 Z" fill="#da70d6"/>
</svg>
<svg style="position:absolute;left:524.8px;top:902px" width="15" height="15" viewBox="0 0 15 15">
<rect x="0" y="0" width="15" height="15" rx="3" fill="#333"/>
<rect x="6" y="2.5" width="3" height="10" fill="#fff"/><rect x="2.5" y="6" width="10" height="3" fill="#fff"/>
</svg>
<div class="t" style="left:541.8px;width:150px;text-align:right;top:901.2px;font-size:17.5px;line-height:17.5px;color:#333">2411165.54</div>
<div class="t" style="left:667.9px;width:150px;text-align:right;top:901.2px;font-size:17.5px;line-height:17.5px;color:#333">2428437.93</div>
<div class="t" style="left:793.8px;width:150px;text-align:right;top:901.2px;font-size:17.5px;line-height:17.5px;color:#333">3228070.6</div>
<div class="t" style="left:919.9px;width:150px;text-align:right;top:901.2px;font-size:17.5px;line-height:17.5px;color:#333">2473372.6</div>
<div class="t" style="left:1046.5px;width:150px;text-align:right;top:901.2px;font-size:17.5px;line-height:17.5px;color:#333">0</div>
<div class="t" style="left:1172.7px;width:150px;text-align:right;top:901.2px;font-size:17.5px;line-height:17.5px;color:#333">0</div>
<div class="t" style="left:1298.9px;width:150px;text-align:right;top:901.2px;font-size:17.5px;line-height:17.5px;color:#333">0</div>
<div class="t" style="left:1425.2px;width:150px;text-align:right;top:901.2px;font-size:17.5px;line-height:17.5px;color:#333">0</div>
<div class="t" style="left:1551.5px;width:150px;text-align:right;top:901.2px;font-size:17.5px;line-height:17.5px;color:#333">0</div>
<div class="t" style="left:1677.6px;width:150px;text-align:right;top:901.2px;font-size:17.5px;line-height:17.5px;color:#333">0</div>
<div class="t" style="left:1804.5px;width:150px;text-align:right;top:901.2px;font-size:17.5px;line-height:17.5px;color:#333">0</div>
<div class="t" style="left:1934.8px;width:150px;text-align:right;top:901.2px;font-size:17.5px;line-height:17.5px;color:#333">0</div>
<div style="position:absolute;left:298px;top:928.40px;width:1793px;height:37.70px;background:#f3f3f3"></div>
<div class="t" style="left:304.3px;top:939.4px;font-size:17.5px;line-height:17.5px;color:#3479b8;font-weight:normal;"><span style="letter-spacing:-0.50px">售后返利</span></div>
<svg style="position:absolute;left:545.5px;top:940px" width="21" height="15" viewBox="0 0 21 15">
<path d="M0.6 0.2 L0.6 14.4 L20.8 14.4" fill="none" stroke="#40e0d0" stroke-width="1.3"/>
<path d="M3.2 11.2 L8.5 6.3 L11 8.6 L16.6 3" fill="none" stroke="#40e0d0" stroke-width="2.4"/>
<path d="M13.3 1.2 L19 1.2 L19 6.8 Z" fill="#40e0d0"/>
</svg>
<div class="t" style="left:541.8px;width:150px;text-align:right;top:939.0px;font-size:17.5px;line-height:17.5px;color:#333">0</div>
<div class="t" style="left:667.9px;width:150px;text-align:right;top:939.0px;font-size:17.5px;line-height:17.5px;color:#333">0</div>
<div class="t" style="left:1172.7px;width:150px;text-align:right;top:939.0px;font-size:17.5px;line-height:17.5px;color:#333">0</div>
<div class="t" style="left:1298.9px;width:150px;text-align:right;top:939.0px;font-size:17.5px;line-height:17.5px;color:#333">0</div>
<div class="t" style="left:1425.2px;width:150px;text-align:right;top:939.0px;font-size:17.5px;line-height:17.5px;color:#333">0</div>
<div class="t" style="left:1551.5px;width:150px;text-align:right;top:939.0px;font-size:17.5px;line-height:17.5px;color:#333">0</div>
<div class="t" style="left:1677.6px;width:150px;text-align:right;top:939.0px;font-size:17.5px;line-height:17.5px;color:#333">0</div>
<div class="t" style="left:1804.5px;width:150px;text-align:right;top:939.0px;font-size:17.5px;line-height:17.5px;color:#333">0</div>
<div class="t" style="left:1934.8px;width:150px;text-align:right;top:939.0px;font-size:17.5px;line-height:17.5px;color:#333">0</div>
<div style="position:absolute;left:298px;top:966.10px;width:1793px;height:37.20px;background:#fcfcfc"></div>
<div class="t" style="left:304.3px;top:976.8px;font-size:17.5px;line-height:17.5px;color:#3479b8;font-weight:normal;"><span style="letter-spacing:-0.50px">整体售后服务成本</span></div>
<svg style="position:absolute;left:545.5px;top:977px" width="21" height="15" viewBox="0 0 21 15">
<path d="M0.6 0.2 L0.6 14.4 L20.8 14.4" fill="none" stroke="#1e90ff" stroke-width="1.3"/>
<path d="M3.2 11.2 L8.5 6.3 L11 8.6 L16.6 3" fill="none" stroke="#1e90ff" stroke-width="2.4"/>
<path d="M13.3 1.2 L19 1.2 L19 6.8 Z" fill="#1e90ff"/>
</svg>
<svg style="position:absolute;left:524.8px;top:977px" width="15" height="15" viewBox="0 0 15 15">
<rect x="0" y="0" width="15" height="15" rx="3" fill="#333"/>
<rect x="6" y="2.5" width="3" height="10" fill="#fff"/><rect x="2.5" y="6" width="10" height="3" fill="#fff"/>
</svg>
<div class="t" style="left:541.8px;width:150px;text-align:right;top:976.4px;font-size:17.5px;line-height:17.5px;color:#333">1145653.17</div>
<div class="t" style="left:667.9px;width:150px;text-align:right;top:976.4px;font-size:17.5px;line-height:17.5px;color:#333">1157387.26</div>
<div class="t" style="left:793.8px;width:150px;text-align:right;top:976.4px;font-size:17.5px;line-height:17.5px;color:#333">1565251.47</div>
<div class="t" style="left:919.9px;width:150px;text-align:right;top:976.4px;font-size:17.5px;line-height:17.5px;color:#333">1113584.88</div>
<div class="t" style="left:1046.5px;width:150px;text-align:right;top:976.4px;font-size:17.5px;line-height:17.5px;color:#333">0</div>
<div class="t" style="left:1172.7px;width:150px;text-align:right;top:976.4px;font-size:17.5px;line-height:17.5px;color:#333">0</div>
<div class="t" style="left:1298.9px;width:150px;text-align:right;top:976.4px;font-size:17.5px;line-height:17.5px;color:#333">0</div>
<div class="t" style="left:1425.2px;width:150px;text-align:right;top:976.4px;font-size:17.5px;line-height:17.5px;color:#333">0</div>
<div class="t" style="left:1551.5px;width:150px;text-align:right;top:976.4px;font-size:17.5px;line-height:17.5px;color:#333">0</div>
<div class="t" style="left:1677.6px;width:150px;text-align:right;top:976.4px;font-size:17.5px;line-height:17.5px;color:#333">0</div>
<div class="t" style="left:1804.5px;width:150px;text-align:right;top:976.4px;font-size:17.5px;line-height:17.5px;color:#333">0</div>
<div class="t" style="left:1934.8px;width:150px;text-align:right;top:976.4px;font-size:17.5px;line-height:17.5px;color:#333">0</div>
<div style="position:absolute;left:298px;top:1003.30px;width:1793px;height:37.70px;background:#f3f3f3"></div>
<div class="t" style="left:304.3px;top:1014.2px;font-size:17.5px;line-height:17.5px;color:#3479b8;font-weight:normal;"><span style="letter-spacing:-0.50px">单车售后服务成本</span></div>
<svg style="position:absolute;left:545.5px;top:1015px" width="21" height="15" viewBox="0 0 21 15">
<path d="M0.6 0.2 L0.6 14.4 L20.8 14.4" fill="none" stroke="#aaaaaa" stroke-width="1.3"/>
<path d="M3.2 11.2 L8.5 6.3 L11 8.6 L16.6 3" fill="none" stroke="#aaaaaa" stroke-width="2.4"/>
<path d="M13.3 1.2 L19 1.2 L19 6.8 Z" fill="#aaaaaa"/>
</svg>
<div class="t" style="left:541.8px;width:150px;text-align:right;top:1013.9px;font-size:17.5px;line-height:17.5px;color:#333">467.42</div>
<div class="t" style="left:667.9px;width:150px;text-align:right;top:1013.9px;font-size:17.5px;line-height:17.5px;color:#333">476.29</div>
<div class="t" style="left:793.8px;width:150px;text-align:right;top:1013.9px;font-size:17.5px;line-height:17.5px;color:#333">618.92</div>
<div class="t" style="left:919.9px;width:150px;text-align:right;top:1013.9px;font-size:17.5px;line-height:17.5px;color:#333">571.95</div>
<div class="t" style="left:1046.5px;width:150px;text-align:right;top:1013.9px;font-size:17.5px;line-height:17.5px;color:#333">0</div>
<div class="t" style="left:1172.7px;width:150px;text-align:right;top:1013.9px;font-size:17.5px;line-height:17.5px;color:#333">0</div>
<div class="t" style="left:1298.9px;width:150px;text-align:right;top:1013.9px;font-size:17.5px;line-height:17.5px;color:#333">0</div>
<div class="t" style="left:1425.2px;width:150px;text-align:right;top:1013.9px;font-size:17.5px;line-height:17.5px;color:#333">0</div>
<div class="t" style="left:1551.5px;width:150px;text-align:right;top:1013.9px;font-size:17.5px;line-height:17.5px;color:#333">0</div>
<div class="t" style="left:1677.6px;width:150px;text-align:right;top:1013.9px;font-size:17.5px;line-height:17.5px;color:#333">0</div>
<div class="t" style="left:1804.5px;width:150px;text-align:right;top:1013.9px;font-size:17.5px;line-height:17.5px;color:#333">0</div>
<div class="t" style="left:1934.8px;width:150px;text-align:right;top:1013.9px;font-size:17.5px;line-height:17.5px;color:#333">0</div>
<div style="position:absolute;left:298px;top:1041.00px;width:1793px;height:37.40px;background:#fcfcfc"></div>
<div class="t" style="left:304.3px;top:1051.8px;font-size:17.5px;line-height:17.5px;color:#3479b8;font-weight:normal;"><span style="letter-spacing:-0.50px">整体售后服务毛利</span></div>
<svg style="position:absolute;left:545.5px;top:1052px" width="21" height="15" viewBox="0 0 21 15">
<path d="M0.6 0.2 L0.6 14.4 L20.8 14.4" fill="none" stroke="#32cd32" stroke-width="1.3"/>
<path d="M3.2 11.2 L8.5 6.3 L11 8.6 L16.6 3" fill="none" stroke="#32cd32" stroke-width="2.4"/>
<path d="M13.3 1.2 L19 1.2 L19 6.8 Z" fill="#32cd32"/>
</svg>
<svg style="position:absolute;left:524.8px;top:1052px" width="15" height="15" viewBox="0 0 15 15">
<rect x="0" y="0" width="15" height="15" rx="3" fill="#333"/>
<rect x="6" y="2.5" width="3" height="10" fill="#fff"/><rect x="2.5" y="6" width="10" height="3" fill="#fff"/>
</svg>
<div class="t" style="left:541.8px;width:150px;text-align:right;top:1051.4px;font-size:17.5px;line-height:17.5px;color:#333">1070751.33</div>
<div class="t" style="left:667.9px;width:150px;text-align:right;top:1051.4px;font-size:17.5px;line-height:17.5px;color:#333">1074294.84</div>
<div class="t" style="left:793.8px;width:150px;text-align:right;top:1051.4px;font-size:17.5px;line-height:17.5px;color:#333">1396726.38</div>
<div class="t" style="left:919.9px;width:150px;text-align:right;top:1051.4px;font-size:17.5px;line-height:17.5px;color:#333">1170478.29</div>
<div class="t" style="left:1046.5px;width:150px;text-align:right;top:1051.4px;font-size:17.5px;line-height:17.5px;color:#333">0</div>
<div class="t" style="left:1172.7px;width:150px;text-align:right;top:1051.4px;font-size:17.5px;line-height:17.5px;color:#333">0</div>
<div class="t" style="left:1298.9px;width:150px;text-align:right;top:1051.4px;font-size:17.5px;line-height:17.5px;color:#333">0</div>
<div class="t" style="left:1425.2px;width:150px;text-align:right;top:1051.4px;font-size:17.5px;line-height:17.5px;color:#333">0</div>
<div class="t" style="left:1551.5px;width:150px;text-align:right;top:1051.4px;font-size:17.5px;line-height:17.5px;color:#333">0</div>
<div class="t" style="left:1677.6px;width:150px;text-align:right;top:1051.4px;font-size:17.5px;line-height:17.5px;color:#333">0</div>
<div class="t" style="left:1804.5px;width:150px;text-align:right;top:1051.4px;font-size:17.5px;line-height:17.5px;color:#333">0</div>
<div class="t" style="left:1934.8px;width:150px;text-align:right;top:1051.4px;font-size:17.5px;line-height:17.5px;color:#333">0</div>
<div style="position:absolute;left:298px;top:1078.40px;width:1793px;height:37.60px;background:#f3f3f3"></div>
<div class="t" style="left:304.3px;top:1089.3px;font-size:17.5px;line-height:17.5px;color:#3479b8;font-weight:normal;"><span style="letter-spacing:-0.50px">单车售后服务毛利</span></div>
<svg style="position:absolute;left:545.5px;top:1090px" width="21" height="15" viewBox="0 0 21 15">
<path d="M0.6 0.2 L0.6 14.4 L20.8 14.4" fill="none" stroke="#aaaaaa" stroke-width="1.3"/>
<path d="M3.2 11.2 L8.5 6.3 L11 8.6 L16.6 3" fill="none" stroke="#aaaaaa" stroke-width="2.4"/>
<path d="M13.3 1.2 L19 1.2 L19 6.8 Z" fill="#aaaaaa"/>
</svg>
<div class="t" style="left:541.8px;width:150px;text-align:right;top:1088.9px;font-size:17.5px;line-height:17.5px;color:#333">436.86</div>
<div class="t" style="left:667.9px;width:150px;text-align:right;top:1088.9px;font-size:17.5px;line-height:17.5px;color:#333">442.1</div>
<div class="t" style="left:793.8px;width:150px;text-align:right;top:1088.9px;font-size:17.5px;line-height:17.5px;color:#333">552.28</div>
<div class="t" style="left:919.9px;width:150px;text-align:right;top:1088.9px;font-size:17.5px;line-height:17.5px;color:#333">601.17</div>
<div class="t" style="left:1046.5px;width:150px;text-align:right;top:1088.9px;font-size:17.5px;line-height:17.5px;color:#333">0</div>
<div class="t" style="left:1172.7px;width:150px;text-align:right;top:1088.9px;font-size:17.5px;line-height:17.5px;color:#333">0</div>
<div class="t" style="left:1298.9px;width:150px;text-align:right;top:1088.9px;font-size:17.5px;line-height:17.5px;color:#333">0</div>
<div class="t" style="left:1425.2px;width:150px;text-align:right;top:1088.9px;font-size:17.5px;line-height:17.5px;color:#333">0</div>
<div class="t" style="left:1551.5px;width:150px;text-align:right;top:1088.9px;font-size:17.5px;line-height:17.5px;color:#333">0</div>
<div class="t" style="left:1677.6px;width:150px;text-align:right;top:1088.9px;font-size:17.5px;line-height:17.5px;color:#333">0</div>
<div class="t" style="left:1804.5px;width:150px;text-align:right;top:1088.9px;font-size:17.5px;line-height:17.5px;color:#333">0</div>
<div class="t" style="left:1934.8px;width:150px;text-align:right;top:1088.9px;font-size:17.5px;line-height:17.5px;color:#333">0</div>
<div style="position:absolute;left:298px;top:1116.00px;width:1793px;height:37.90px;background:#fcfcfc"></div>
<div class="t" style="left:304.3px;top:1127.0px;font-size:17.5px;line-height:17.5px;color:#3479b8;font-weight:normal;"><span style="letter-spacing:-0.50px">整体售后服务毛利率</span></div>
<svg style="position:absolute;left:545.5px;top:1127px" width="21" height="15" viewBox="0 0 21 15">
<path d="M0.6 0.2 L0.6 14.4 L20.8 14.4" fill="none" stroke="#aaaaaa" stroke-width="1.3"/>
<path d="M3.2 11.2 L8.5 6.3 L11 8.6 L16.6 3" fill="none" stroke="#aaaaaa" stroke-width="2.4"/>
<path d="M13.3 1.2 L19 1.2 L19 6.8 Z" fill="#aaaaaa"/>
</svg>
<svg style="position:absolute;left:524.8px;top:1127px" width="15" height="15" viewBox="0 0 15 15">
<rect x="0" y="0" width="15" height="15" rx="3" fill="#333"/>
<rect x="6" y="2.5" width="3" height="10" fill="#fff"/><rect x="2.5" y="6" width="10" height="3" fill="#fff"/>
</svg>
<div class="t" style="left:541.8px;width:150px;text-align:right;top:1126.7px;font-size:17.5px;line-height:17.5px;color:#333">44.41</div>
<div class="t" style="left:667.9px;width:150px;text-align:right;top:1126.7px;font-size:17.5px;line-height:17.5px;color:#333">44.24</div>
<div class="t" style="left:793.8px;width:150px;text-align:right;top:1126.7px;font-size:17.5px;line-height:17.5px;color:#333">43.27</div>
<div class="t" style="left:919.9px;width:150px;text-align:right;top:1126.7px;font-size:17.5px;line-height:17.5px;color:#333">47.32</div>
<div class="t" style="left:1046.5px;width:150px;text-align:right;top:1126.7px;font-size:17.5px;line-height:17.5px;color:#333">0</div>
<div class="t" style="left:1172.7px;width:150px;text-align:right;top:1126.7px;font-size:17.5px;line-height:17.5px;color:#333">0</div>
<div class="t" style="left:1298.9px;width:150px;text-align:right;top:1126.7px;font-size:17.5px;line-height:17.5px;color:#333">0</div>
<div class="t" style="left:1425.2px;width:150px;text-align:right;top:1126.7px;font-size:17.5px;line-height:17.5px;color:#333">0</div>
<div class="t" style="left:1551.5px;width:150px;text-align:right;top:1126.7px;font-size:17.5px;line-height:17.5px;color:#333">0</div>
<div class="t" style="left:1677.6px;width:150px;text-align:right;top:1126.7px;font-size:17.5px;line-height:17.5px;color:#333">0</div>
<div class="t" style="left:1804.5px;width:150px;text-align:right;top:1126.7px;font-size:17.5px;line-height:17.5px;color:#333">0</div>
<div class="t" style="left:1934.8px;width:150px;text-align:right;top:1126.7px;font-size:17.5px;line-height:17.5px;color:#333">0</div>
<div style="position:absolute;left:298px;top:1153.90px;width:1793px;height:37.00px;background:#f3f3f3"></div>
<div class="t" style="left:304.3px;top:1164.5px;font-size:17.5px;line-height:17.5px;color:#3479b8;font-weight:normal;"><span style="letter-spacing:-0.50px">服务部费用</span></div>
<svg style="position:absolute;left:545.5px;top:1165px" width="21" height="15" viewBox="0 0 21 15">
<path d="M0.6 0.2 L0.6 14.4 L20.8 14.4" fill="none" stroke="#00fa9a" stroke-width="1.3"/>
<path d="M3.2 11.2 L8.5 6.3 L11 8.6 L16.6 3" fill="none" stroke="#00fa9a" stroke-width="2.4"/>
<path d="M13.3 1.2 L19 1.2 L19 6.8 Z" fill="#00fa9a"/>
</svg>
<div class="t" style="left:541.8px;width:150px;text-align:right;top:1164.1px;font-size:17.5px;line-height:17.5px;color:#333">0</div>
<div class="t" style="left:667.9px;width:150px;text-align:right;top:1164.1px;font-size:17.5px;line-height:17.5px;color:#333">0</div>
<div class="t" style="left:1172.7px;width:150px;text-align:right;top:1164.1px;font-size:17.5px;line-height:17.5px;color:#333">0</div>
<div class="t" style="left:1298.9px;width:150px;text-align:right;top:1164.1px;font-size:17.5px;line-height:17.5px;color:#333">0</div>
<div class="t" style="left:1425.2px;width:150px;text-align:right;top:1164.1px;font-size:17.5px;line-height:17.5px;color:#333">0</div>
<div class="t" style="left:1551.5px;width:150px;text-align:right;top:1164.1px;font-size:17.5px;line-height:17.5px;color:#333">0</div>
<div class="t" style="left:1677.6px;width:150px;text-align:right;top:1164.1px;font-size:17.5px;line-height:17.5px;color:#333">0</div>
<div class="t" style="left:1804.5px;width:150px;text-align:right;top:1164.1px;font-size:17.5px;line-height:17.5px;color:#333">0</div>
<div class="t" style="left:1934.8px;width:150px;text-align:right;top:1164.1px;font-size:17.5px;line-height:17.5px;color:#333">0</div>
<div style="position:absolute;left:298px;top:1190.90px;width:1793px;height:36.10px;background:#fcfcfc"></div>
<div class="t" style="left:304.3px;top:1201.0px;font-size:17.5px;line-height:17.5px;color:#3479b8;font-weight:normal;"><span style="letter-spacing:-0.50px">整体售后服务利润</span></div>
<svg style="position:absolute;left:545.5px;top:1201px" width="21" height="15" viewBox="0 0 21 15">
<path d="M0.6 0.2 L0.6 14.4 L20.8 14.4" fill="none" stroke="#ffd700" stroke-width="1.3"/>
<path d="M3.2 11.2 L8.5 6.3 L11 8.6 L16.6 3" fill="none" stroke="#ffd700" stroke-width="2.4"/>
<path d="M13.3 1.2 L19 1.2 L19 6.8 Z" fill="#ffd700"/>
</svg>
<div class="t" style="left:541.8px;width:150px;text-align:right;top:1200.7px;font-size:17.5px;line-height:17.5px;color:#333">1070751.33</div>
<div class="t" style="left:667.9px;width:150px;text-align:right;top:1200.7px;font-size:17.5px;line-height:17.5px;color:#333">1074294.84</div>
<div class="t" style="left:793.8px;width:150px;text-align:right;top:1200.7px;font-size:17.5px;line-height:17.5px;color:#333">1396726.38</div>
<div class="t" style="left:919.9px;width:150px;text-align:right;top:1200.7px;font-size:17.5px;line-height:17.5px;color:#333">1170478.29</div>
<div class="t" style="left:1046.5px;width:150px;text-align:right;top:1200.7px;font-size:17.5px;line-height:17.5px;color:#333">0</div>
<div class="t" style="left:1172.7px;width:150px;text-align:right;top:1200.7px;font-size:17.5px;line-height:17.5px;color:#333">0</div>
<div class="t" style="left:1298.9px;width:150px;text-align:right;top:1200.7px;font-size:17.5px;line-height:17.5px;color:#333">0</div>
<div class="t" style="left:1425.2px;width:150px;text-align:right;top:1200.7px;font-size:17.5px;line-height:17.5px;color:#333">0</div>
<div class="t" style="left:1551.5px;width:150px;text-align:right;top:1200.7px;font-size:17.5px;line-height:17.5px;color:#333">0</div>
<div class="t" style="left:1677.6px;width:150px;text-align:right;top:1200.7px;font-size:17.5px;line-height:17.5px;color:#333">0</div>
<div class="t" style="left:1804.5px;width:150px;text-align:right;top:1200.7px;font-size:17.5px;line-height:17.5px;color:#333">0</div>
<div class="t" style="left:1934.8px;width:150px;text-align:right;top:1200.7px;font-size:17.5px;line-height:17.5px;color:#333">0</div>
<div style="position:absolute;left:572px;top:815px;width:1px;height:412.0px;background:#999999"></div>
<div style="position:absolute;left:699.0px;top:815px;width:1px;height:412.0px;background:#dddddd"></div>
<div style="position:absolute;left:825.1px;top:815px;width:1px;height:412.0px;background:#dddddd"></div>
<div style="position:absolute;left:951.0px;top:815px;width:1px;height:412.0px;background:#dddddd"></div>
<div style="position:absolute;left:1077.1px;top:815px;width:1px;height:412.0px;background:#dddddd"></div>
<div style="position:absolute;left:1203.7px;top:815px;width:1px;height:412.0px;background:#dddddd"></div>
<div style="position:absolute;left:1329.9px;top:815px;width:1px;height:412.0px;background:#dddddd"></div>
<div style="position:absolute;left:1456.1px;top:815px;width:1px;height:412.0px;background:#dddddd"></div>
<div style="position:absolute;left:1582.4px;top:815px;width:1px;height:412.0px;background:#dddddd"></div>
<div style="position:absolute;left:1708.7px;top:815px;width:1px;height:412.0px;background:#dddddd"></div>
<div style="position:absolute;left:1834.8px;top:815px;width:1px;height:412.0px;background:#dddddd"></div>
<div style="position:absolute;left:1961.7px;top:815px;width:1px;height:412.0px;background:#dddddd"></div>
<div style="position:absolute;left:573px;top:1227.0px;width:1518px;height:19.5px;background:#f1f1f1"></div>
<div style="position:absolute;left:580.5px;top:1233px;width:0;height:0;border-top:4.5px solid transparent;border-bottom:4.5px solid transparent;border-right:5.5px solid #a3a3a3"></div>
<div style="position:absolute;left:2078px;top:1233px;width:0;height:0;border-top:4.5px solid transparent;border-bottom:4.5px solid transparent;border-left:5.5px solid #a3a3a3"></div>
<div style="position:absolute;left:0;top:1296px;width:2116px;height:8px;background:#fff"></div>
<div style="position:absolute;left:-2px;top:1280px;width:703px;height:30px;background:#f2f2f2;box-sizing:border-box;border:1px solid #cfcfcf;border-top-right-radius:4px"></div>
<div class="t" style="left:0.5px;top:1286.5px;font-size:16px;line-height:18px;color:#3a3a3a">adom.qqdms.com</div>
</body></html>
